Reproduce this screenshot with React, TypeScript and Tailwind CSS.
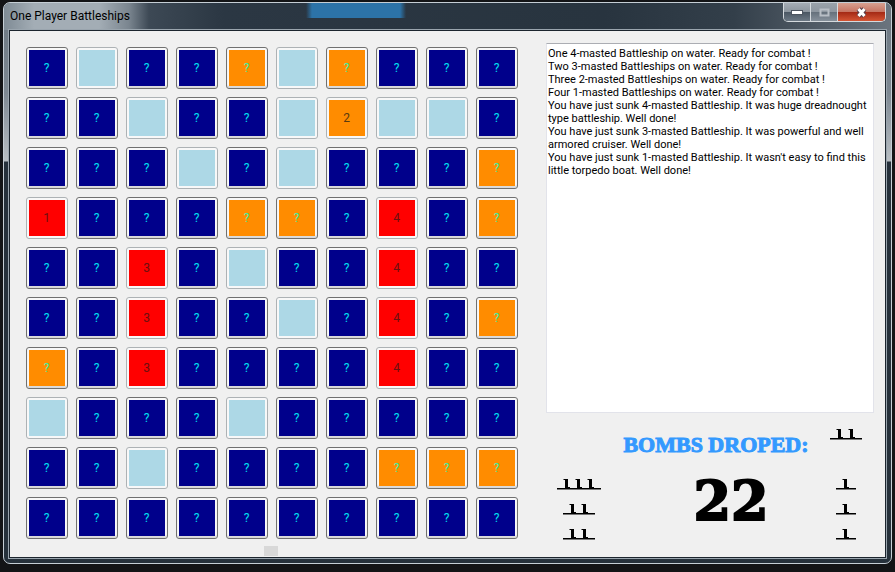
const BOARD = [
  "?.??o.o???",
  "??.??.2..?",
  "???.?.???o",
  "1???oo?4?o",
  "??3?.??4??",
  "??3??.?4?o",
  "o?3????4??",
  ".???.?????",
  "??.????ooo",
  "??????????",
];

const LOG = [
  "One 4-masted Battleship on water. Ready for combat !",
  "Two 3-masted Battleships on water. Ready for combat !",
  "Three 2-masted Battleships on water. Ready for combat !",
  "Four 1-masted Battleships on water. Ready for combat !",
  "You have just sunk 4-masted Battleship. It was huge dreadnought",
  "type battleship. Well done!",
  "You have just sunk 3-masted Battleship. It was powerful and well",
  "armored cruiser. Well done!",
  "You have just sunk 1-masted Battleship. It wasn't easy to find this",
  "little torpedo boat. Well done!",
].join("\n");

function cellStyle(c: string) {
  if (c === "?") return "bg-[#00008b] text-[#00e0f0]";
  if (c === "o") return "bg-[#ff8c00] text-[#40f0a0]";
  if (c === ".") return "bg-[#add8e6]";
  if (c === "2") return "bg-[#ff8c00] text-[#5a3a10]";
  return "bg-[#ff0000] text-[#6b1010]";
}

function Cell({ c, label }: { c: string; label: string }) {
  const live = c === "?" || c === "o";
  const text = c === "." ? "" : c === "o" ? "?" : c;
  return (
    <button
      type="button"
      aria-label={label}
      className={`size-[42px] rounded-[3px] border bg-[#f8f8f8] p-[2px] ${live ? "border-[#707070] shadow-[inset_0_-2px_1px_#d8d8d8]" : "border-[#adb2b5]"}`}
    >
      <span className={`flex size-full items-center justify-center pr-px text-[12px] leading-none ${cellStyle(c)}`}>
        {text}
      </span>
    </button>
  );
}

function Ship({ masts }: { masts: number }) {
  const width = masts * 12 + 8;
  return (
    <svg width={width} height="11" viewBox={`0 0 ${width} 11`} role="img" aria-label={`${masts}-masted ship`}>
      <path d={`M0 9h${width}v1.500H0z`} />
      {Array.from({ length: masts }, (_, i) => (
        <path key={i} d="M6.500 0H11v8h2v1.500H8V1H6.500z" transform={`translate(${i * 12} 0)`} />
      ))}
    </svg>
  );
}

export default function App() {
  return (
    <div className="flex min-h-screen flex-col bg-[#131416] pt-[2px] pr-[3px] pb-2 pl-[3px] font-[Roboto,sans-serif] text-black">
      <div className="flex flex-1 flex-col rounded-[7px] border border-[#c5ced5] bg-[linear-gradient(#6b7680_0,#7d8892_90px,#b8bec3_158px,#26313b_159px,#26313b_100%)] px-[5px] pb-[5px]">
        <header className="-mx-[5px] flex h-[27px] items-start justify-between rounded-t-[6px] bg-[linear-gradient(90deg,transparent_302px,#2c73a8_308px,#2c73a8_396px,transparent_402px),linear-gradient(90deg,#7f8b95_0,#a3adb5_30px,#a3adb5_95px,#7a858f_125px,#3d4955_145px,#2b3743_220px,#28343f_600px,#333f4a_730px,#6b747e)] bg-[length:100%_15px,100%_100%] bg-no-repeat pr-[5px] pl-[6px]">
          <h1 className="pt-[5px] text-[12px] leading-4">One Player Battleships</h1>
          <div className="flex h-[19px] overflow-hidden rounded-b-[5px] border border-t-0 border-[#d5dade]">
            <button type="button" aria-label="Minimize" className="flex w-[27px] items-center justify-center border-r border-[#d5dade] bg-[linear-gradient(#a5adb5,#8c959e_50%,#4a5662_50%,#6c7884)]">
              <svg width="12" height="6"><rect x=".5" y="1.5" width="11" height="4" fill="#fff" stroke="#4d5560" /></svg>
            </button>
            <button type="button" aria-label="Maximize" disabled className="flex w-[27px] items-center justify-center border-r border-[#d5dade] bg-[linear-gradient(#9aa2aa,#8d969f_50%,#65707b_50%,#87919b)]">
              <svg width="11" height="9" fill="none"><path d="M1.5 1.5h8v6h-8z" stroke="#b8bec5" strokeWidth="2" /></svg>
            </button>
            <button type="button" aria-label="Close" className="flex w-[47px] items-center justify-center bg-[linear-gradient(#d6a090,#c67361_50%,#a32814_50%,#d45534)]">
              <svg width="13" height="11" fill="none">
                <path d="M3.5 2l6 7M9.5 2l-6 7" stroke="#59404a" strokeWidth="5" />
                <path d="M3.5 2l6 7M9.5 2l-6 7" stroke="#fff" strokeWidth="3" />
              </svg>
            </button>
          </div>
        </header>

        <main className="flex flex-1 flex-col border border-[#1c252e] bg-[#f0f0f0] outline outline-[#9aa5ae]">
          <div className="flex items-start gap-[28px] pt-3 pr-[11px] pl-4">
            <section aria-label="Board" className="grid shrink-0 grid-cols-10 gap-2 pt-1">
              {BOARD.flatMap((row, y) =>
                row.split("").map((c, x) => <Cell key={`${x}-${y}`} c={c} label={`Row ${y + 1}, column ${x + 1}`} />),
              )}
            </section>

            <aside className="flex min-w-0 flex-1 flex-col">
              <textarea
                readOnly
                aria-label="Combat log"
                defaultValue={LOG}
                className="block h-[370px] w-full resize-none overflow-hidden border border-[#e2e3ea] border-t-[#abadb3] bg-white px-px py-[3px] text-[11px] leading-[13px] whitespace-pre outline-none"
              />
              <div className="flex justify-between pt-4 pr-3 pl-[10px]">
                <div className="flex w-[46px] flex-col items-center gap-[14px] pt-[50px]">
                  <Ship masts={3} />
                  <Ship masts={2} />
                  <Ship masts={2} />
                </div>
                <div className="flex flex-col items-center font-bold">
                  <h2 className="font-['Liberation_Serif',serif] text-[22px] leading-8 text-[#3399ff] [-webkit-text-stroke:1px_#3399ff]">BOMBS DROPED:</h2>
                  <output className="self-end pt-2 pr-10 font-['DejaVu_Serif',serif] text-[54px] leading-[64px] [-webkit-text-stroke:2px_#000]">22</output>
                </div>
                <div className="flex flex-col items-center gap-[14px]">
                  <Ship masts={2} />
                  <div className="h-[11px]" />
                  <Ship masts={1} />
                  <Ship masts={1} />
                  <Ship masts={1} />
                </div>
              </div>
            </aside>
          </div>
          <div className="mt-[6px] ml-[254px] h-[10px] w-[14px] bg-[#d8d8d8]" />
        </main>
      </div>
    </div>
  );
}
